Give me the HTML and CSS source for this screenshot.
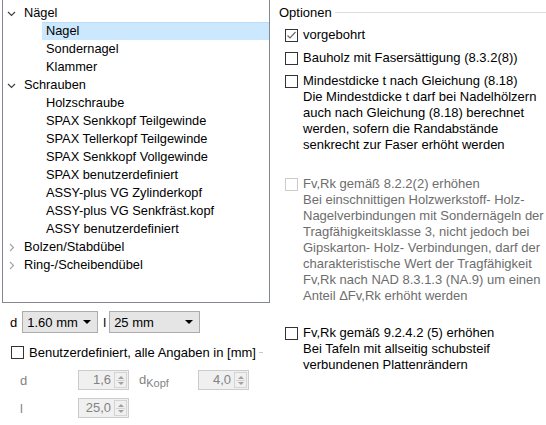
FILE: index.html
```html
<!DOCTYPE html>
<html lang="de">
<head>
    <meta charset="UTF-8">
    <title>Verbindungsmittel</title>
    <link rel="stylesheet" href="styles.css">
</head>
<body>
    <div class="page">
        <div class="left">
            <div class="tree">
                <div class="node"><svg class="chev" width="9" height="9" viewBox="0 0 9 9"><polyline points="1,3 4.5,6.5 8,3" /></svg><span>Nägel</span></div>
                <div class="leaf selected">Nagel</div>
                <div class="leaf">Sondernagel</div>
                <div class="leaf">Klammer</div>
                <div class="node"><svg class="chev" width="9" height="9" viewBox="0 0 9 9"><polyline points="1,3 4.5,6.5 8,3" /></svg><span>Schrauben</span></div>
                <div class="leaf">Holzschraube</div>
                <div class="leaf">SPAX Senkkopf Teilgewinde</div>
                <div class="leaf">SPAX Tellerkopf Teilgewinde</div>
                <div class="leaf">SPAX Senkkopf Vollgewinde</div>
                <div class="leaf">SPAX benutzerdefiniert</div>
                <div class="leaf">ASSY-plus VG Zylinderkopf</div>
                <div class="leaf">ASSY-plus VG Senkfräst.kopf</div>
                <div class="leaf">ASSY benutzerdefiniert</div>
                <div class="node closed"><svg class="chev" width="9" height="9" viewBox="0 0 9 9"><polyline points="3,1 6.5,4.5 3,8" /></svg><span>Bolzen/Stabdübel</span></div>
                <div class="node closed"><svg class="chev" width="9" height="9" viewBox="0 0 9 9"><polyline points="3,1 6.5,4.5 3,8" /></svg><span>Ring-/Scheibendübel</span></div>
            </div>

            <div class="sizes">
                <span class="size-label">d</span>
                <div class="combo combo-d"><span>1.60 mm</span><svg width="8" height="4" viewBox="0 0 8 4"><polygon points="0,0 8,0 4,4" /></svg></div>
                <span class="size-label size-l">l</span>
                <div class="combo combo-l"><span>25 mm</span><svg width="8" height="4" viewBox="0 0 8 4"><polygon points="0,0 8,0 4,4" /></svg></div>
            </div>

            <div class="custom">
                <div class="custom-head">
                    <span class="box"></span>
                    <span>Benutzerdefiniert, alle Angaben in [mm]</span>
                    <span class="dash"></span>
                </div>
                <div class="spin-row">
                    <span class="spin-label">d</span>
                    <div class="spin"><span class="spin-value">1,6</span><span class="spin-btn"><i class="up"></i><i class="down"></i></span></div>
                    <span class="spin-label second">d<sub>Kopf</sub></span>
                    <div class="spin"><span class="spin-value">4,0</span><span class="spin-btn"><i class="up"></i><i class="down"></i></span></div>
                </div>
                <div class="spin-row">
                    <span class="spin-label">l</span>
                    <div class="spin"><span class="spin-value">25,0</span><span class="spin-btn"><i class="up"></i><i class="down"></i></span></div>
                </div>
            </div>
        </div>

        <div class="right">
            <div class="legend"><span>Optionen</span><span class="rule"></span></div>

            <div class="option">
                <span class="box checked"><svg width="11" height="11" viewBox="0 0 11 11"><polyline points="1.5,5.5 4,8 9.5,2" /></svg></span>
                <div class="text">vorgebohrt</div>
            </div>
            <div class="option">
                <span class="box"></span>
                <div class="text">Bauholz mit Fasersättigung (8.3.2(8))</div>
            </div>
            <div class="option">
                <span class="box"></span>
                <div class="text">Mindestdicke t nach Gleichung (8.18)<br>Die Mindestdicke t darf bei Nadelhölzern<br>auch nach Gleichung (8.18) berechnet<br>werden, sofern die Randabstände<br>senkrecht zur Faser erhöht werden</div>
            </div>
            <div class="option disabled gap-lg">
                <span class="box"></span>
                <div class="text">Fv,Rk gemäß 8.2.2(2) erhöhen<br>Bei einschnittigen Holzwerkstoff- Holz-<br>Nagelverbindungen mit Sondernägeln der<br>Tragfähigkeitsklasse 3, nicht jedoch bei<br>Gipskarton- Holz- Verbindungen, darf der<br>charakteristische Wert der Tragfähigkeit<br>Fv,Rk nach NAD 8.3.1.3 (NA.9) um einen<br>Anteil ΔFv,Rk erhöht werden</div>
            </div>
            <div class="option gap-md">
                <span class="box"></span>
                <div class="text">Fv,Rk gemäß 9.2.4.2 (5) erhöhen<br>Bei Tafeln mit allseitig schubsteif<br>verbundenen Plattenrändern</div>
            </div>
        </div>
    </div>
</body>
</html>
```

FILE: styles.css
```css
body {
    margin: 0;
    font-family: "Liberation Sans", Arial, sans-serif;
    font-size: 13px;
    color: #000;
    background: #fff;
}
.page {
    display: flex;
    width: 546px;
    height: 425px;
    overflow: hidden;
}
.left {
    width: 270px;
    flex: none;
}
.tree {
    margin-left: 2px;
    width: 268px;
    height: 303px;
    box-sizing: border-box;
    border: 1px solid #828790;
    border-top: none;
    padding-top: 4px;
    font-size: 12.8px;
}
.node, .leaf {
    height: 18px;
    line-height: 18px;
    white-space: nowrap;
}
.node {
    display: flex;
    align-items: center;
}
.chev {
    width: 9px;
    height: 9px;
    margin-left: 4px;
    margin-right: 8px;
    fill: none;
    stroke: #404040;
    stroke-width: 1.2;
}
.closed .chev {
    stroke: #a6a6a6;
}
.leaf {
    margin-left: 39px;
    padding-left: 4px;
}
.leaf.selected {
    background: #cce8ff;
    box-shadow: inset 0 1px 0 #b9dcf7;
}
.sizes {
    display: flex;
    align-items: center;
    margin-top: 8px;
    padding-left: 10px;
    height: 22px;
}
.size-label {
    margin-right: 5px;
}
.size-l {
    margin-left: 5px;
    margin-right: 3px;
}
.combo {
    height: 22px;
    box-sizing: border-box;
    border: 1px solid #acacac;
    background: #e5e5e5;
    display: flex;
    align-items: center;
    justify-content: space-between;
    padding: 0 6px 0 4px;
}
.combo svg {
    fill: #000;
}
.combo-d {
    width: 76px;
}
.combo-l {
    width: 91px;
}
.custom {
    margin-top: 13px;
}
.custom-head {
    display: flex;
    align-items: center;
    padding-left: 11px;
    height: 13px;
    white-space: nowrap;
}
.custom-head .box {
    margin-right: 5px;
}
.dash {
    width: 4px;
    height: 1px;
    margin-left: 3px;
    background: #c8c8c8;
}
.box {
    flex: none;
    width: 13px;
    height: 13px;
    box-sizing: border-box;
    border: 1px solid #333;
    background: #fff;
    display: flex;
    align-items: center;
    justify-content: center;
}
.box.checked svg {
    fill: none;
    stroke: #6a6a6a;
    stroke-width: 1.2;
}
.spin-row {
    display: flex;
    align-items: center;
    height: 20px;
    margin-top: 11px;
    padding-left: 20px;
    color: #838383;
}
.spin-row + .spin-row {
    margin-top: 8px;
}
.spin-label {
    width: 58px;
}
.spin-label.second {
    width: 59px;
    margin-left: 10px;
}
.spin-label sub {
    font-size: 11px;
    vertical-align: -3px;
}
.spin {
    width: 51px;
    height: 20px;
    box-sizing: border-box;
    border: 1px solid #cccccc;
    background: #f0f0f0;
    display: flex;
}
.spin-value {
    flex: 1;
    text-align: right;
    line-height: 18px;
    padding-right: 3px;
}
.spin-btn {
    width: 11px;
    margin: 1px 1px 1px 0;
    border: 1px solid #d4d4d4;
    display: flex;
    flex-direction: column;
    align-items: center;
    justify-content: center;
    gap: 3px;
    position: relative;
}
.spin-btn::after {
    content: "";
    position: absolute;
    left: 1px;
    right: 1px;
    top: 50%;
    height: 1px;
    background: #d4d4d4;
}
.spin-btn i {
    width: 0;
    height: 0;
    border-left: 3px solid transparent;
    border-right: 3px solid transparent;
}
.spin-btn .up {
    border-bottom: 3px solid #a0a0a0;
}
.spin-btn .down {
    border-top: 3px solid #a0a0a0;
}
.right {
    flex: 1;
    padding-left: 9px;
}
.legend {
    display: flex;
    align-items: center;
    gap: 3px;
    margin-top: 4px;
    height: 16px;
}
.rule {
    flex: 1;
    height: 1px;
    background: #dcdcdc;
}
.option {
    display: flex;
    align-items: flex-start;
    gap: 5px;
    margin-top: 7px;
    padding-left: 6px;
}
.option .box {
    margin-top: 2px;
}
.option .text {
    line-height: 16px;
    white-space: nowrap;
}
.option.gap-lg {
    margin-top: 23px;
}
.option.gap-md {
    margin-top: 21px;
}
.option.disabled {
    color: #6d6d6d;
}
.option.disabled .box {
    border-color: #cccccc;
}
```
